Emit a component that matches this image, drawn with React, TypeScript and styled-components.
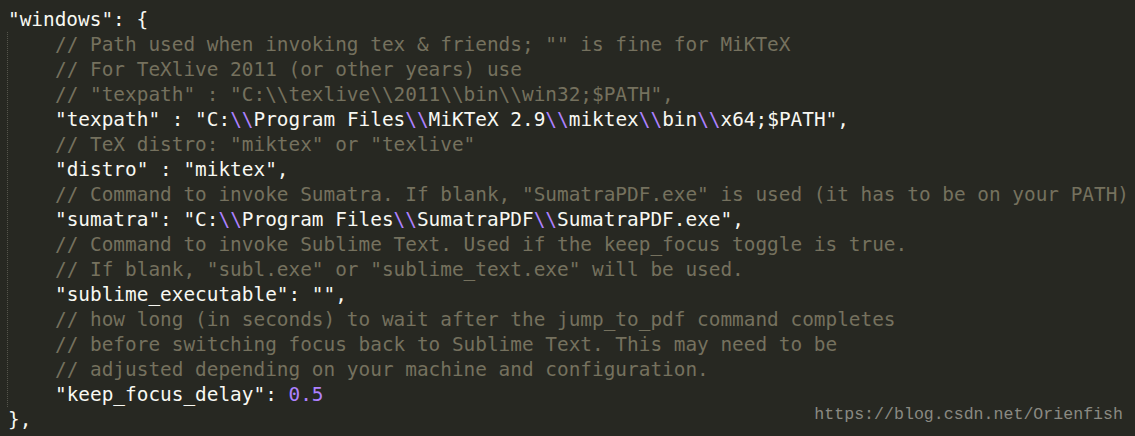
import * as React from 'react'
import styled, { createGlobalStyle } from 'styled-components'

const Global = createGlobalStyle`
  html, body {
    margin: 0;
    padding: 0;
    background: #272822;
  }
`

const S = {
  Editor: styled.div`
  position: relative;
  width: 1135px;
  height: 436px;
  box-sizing: border-box;
  padding: 7px 0 0 8px;
  background: #272822;
  color: #f8f8f2;
  font-family: "DejaVu Sans Mono", "Liberation Mono", monospace;
  font-size: 19.4px;
  line-height: 25px;
  overflow: hidden;
`,
  Line: styled.div`
  white-space: pre;
  height: 25px;
`,
  Block: styled.div`
  margin-left: -1px;
  padding-left: 47px;
  border-left: 1px dotted #55554c;
`,
  Comment: styled.span`
  color: #75715e;
`,
  Esc: styled.span`
  color: #ae81ff;
`,
  Num: styled.span`
  color: #ae81ff;
`,
  Watermark: styled.div`
  position: absolute;
  right: 12px;
  bottom: 9px;
  font-family: "Liberation Mono", monospace;
  font-size: 16.6px;
  color: #8a8a82;
  letter-spacing: 0;
`
}

const E = () => <S.Esc>{'\\\\'}</S.Esc>

export default function App() {
  return (
    <>
      <Global />
      <S.Editor>
        <S.Line>{'"windows": {'}</S.Line>
        <S.Block>
          <S.Line><S.Comment>{'// Path used when invoking tex & friends; "" is fine for MiKTeX'}</S.Comment></S.Line>
          <S.Line><S.Comment>{'// For TeXlive 2011 (or other years) use'}</S.Comment></S.Line>
          <S.Line><S.Comment>{'// "texpath" : "C:\\\\texlive\\\\2011\\\\bin\\\\win32;$PATH",'}</S.Comment></S.Line>
          <S.Line>
            {'"texpath" : "C:'}<E />{'Program Files'}<E />{'MiKTeX 2.9'}<E />{'miktex'}<E />{'bin'}<E />{'x64;$PATH",'}
          </S.Line>
          <S.Line><S.Comment>{'// TeX distro: "miktex" or "texlive"'}</S.Comment></S.Line>
          <S.Line>{'"distro" : "miktex",'}</S.Line>
          <S.Line><S.Comment>{'// Command to invoke Sumatra. If blank, "SumatraPDF.exe" is used (it has to be on your PATH)'}</S.Comment></S.Line>
          <S.Line>
            {'"sumatra": "C:'}<E />{'Program Files'}<E />{'SumatraPDF'}<E />{'SumatraPDF.exe",'}
          </S.Line>
          <S.Line><S.Comment>{'// Command to invoke Sublime Text. Used if the keep_focus toggle is true.'}</S.Comment></S.Line>
          <S.Line><S.Comment>{'// If blank, "subl.exe" or "sublime_text.exe" will be used.'}</S.Comment></S.Line>
          <S.Line>{'"sublime_executable": "",'}</S.Line>
          <S.Line><S.Comment>{'// how long (in seconds) to wait after the jump_to_pdf command completes'}</S.Comment></S.Line>
          <S.Line><S.Comment>{'// before switching focus back to Sublime Text. This may need to be'}</S.Comment></S.Line>
          <S.Line><S.Comment>{'// adjusted depending on your machine and configuration.'}</S.Comment></S.Line>
          <S.Line>{'"keep_focus_delay": '}<S.Num>0.5</S.Num></S.Line>
        </S.Block>
        <S.Line>{'},'}</S.Line>
        <S.Watermark>https://blog.csdn.net/Orienfish</S.Watermark>
      </S.Editor>
    </>
  )
}
